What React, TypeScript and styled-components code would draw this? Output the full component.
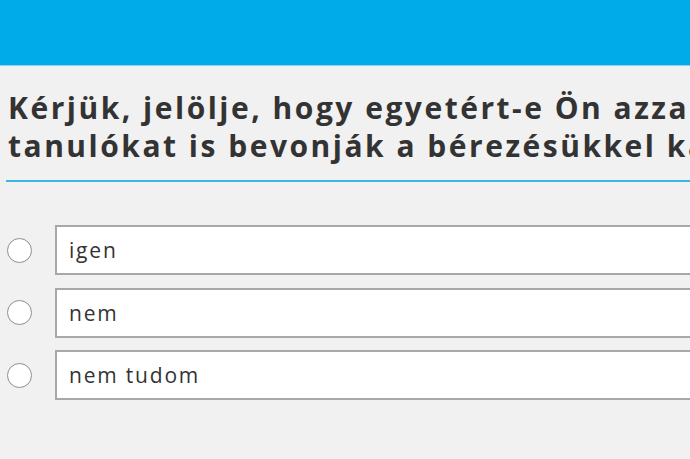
import React from "react";
import styled, { createGlobalStyle } from "styled-components";

const Global = createGlobalStyle`
  html, body {
    margin: 0;
    padding: 0;
    background: #f1f1f1;
    overflow: hidden;
    width: 690px;
    height: 459px;
  }
  body {
    font-family: "Open Sans", "Noto Sans", sans-serif;
  }
`;

const Page = styled.div`
  width: 1200px;
  min-height: 459px;
  background: #f1f1f1;
`;

const Header = styled.header`
  height: 65px;
  background: #00abe9;
  border-bottom: 1px solid #86d6f3;
`;

const Main = styled.main`
  padding: 0 0 0 6px;
`;

const Question = styled.h2`
  margin: 23px 0 0 0;
  padding: 0 0 15px 2px;
  font-family: "Open Sans", sans-serif;
  font-weight: 700;
  font-size: 30px;
  line-height: 38px;
  color: #333333;
  white-space: nowrap;
  letter-spacing: 2.5px;
  border-bottom: 2px solid #3db7e6;
`;

const Options = styled.div`
  display: flex;
  flex-direction: column;
  gap: 12.5px;
  margin-top: 43px;
`;

const OptionRow = styled.label`
  display: flex;
  align-items: center;
  gap: 23px;
  height: 50px;
`;

const Radio = styled.span`
  flex: 0 0 auto;
  width: 23px;
  height: 23px;
  margin-left: 1px;
  border: 1.5px solid #8e8e8e;
  border-radius: 50%;
  background: #ffffff;
`;

const Field = styled.div`
  flex: 1 1 auto;
  box-sizing: border-box;
  height: 50px;
  display: flex;
  align-items: center;
  padding-left: 12px;
  background: #ffffff;
  border: 2px solid #a8a8a8;
  font-family: "Open Sans", sans-serif;
  font-size: 21px;
  color: #333333;
  letter-spacing: 1.8px;
`;

const options = ["igen", "nem", "nem tudom"];

export default function App() {
  return (
    <Page>
      <Global />
      <Header />
      <Main>
        <Question>
          Kérjük, jelölje, hogy egyetért-e Ön azzal, hogy a döntésekbe a
          <br />
          tanulókat is bevonják a bérezésükkel kapcsolatban?
        </Question>
        <Options>
          {options.map((o) => (
            <OptionRow key={o}>
              <Radio />
              <Field>{o}</Field>
            </OptionRow>
          ))}
        </Options>
      </Main>
    </Page>
  );
}
